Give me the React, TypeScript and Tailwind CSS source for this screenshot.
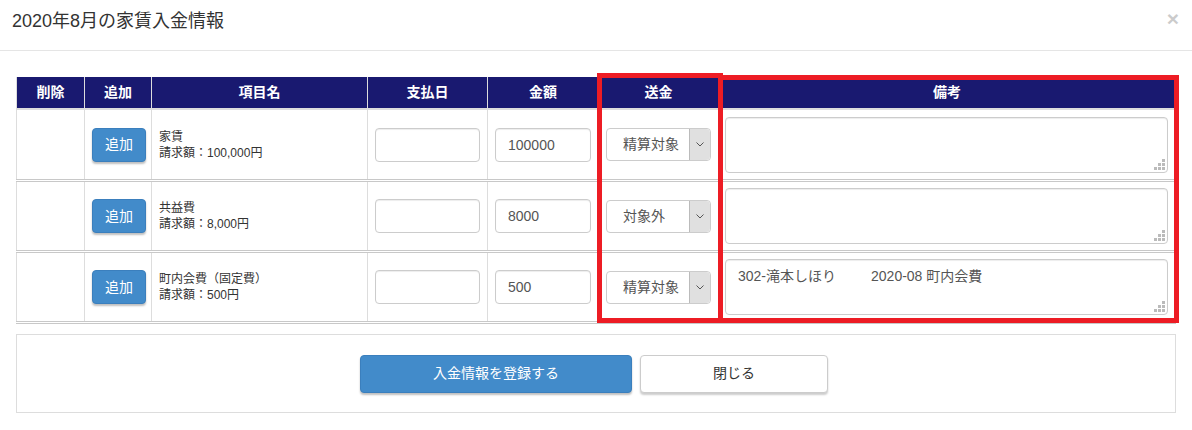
const cols = "grid grid-cols-[68px_67px_216px_120px_111px_120px_458px]";
const cell = "flex items-center border-l border-[#ddd] px-[7px]";

type Row = {
  name: string;
  billed: string;
  amount: string;
  send: string;
  note: string;
  h: string;
};

const rows: Row[] = [
  { name: "家賃", billed: "請求額：100,000円", amount: "100000", send: "精算対象", note: "", h: "h-[72px]" },
  { name: "共益費", billed: "請求額：8,000円", amount: "8000", send: "対象外", note: "", h: "h-[71px]" },
  {
    name: "町内会費（固定費）",
    billed: "請求額：500円",
    amount: "500",
    send: "精算対象",
    note: "302-滝本しほり         2020-08 町内会費",
    h: "h-[71px]",
  },
];

const headers = ["削除", "追加", "項目名", "支払日", "金額", "送金", "備考"];

function Grip() {
  return (
    <svg width="11" height="11" viewBox="0 0 11 11" className="absolute bottom-[3px] right-[3px]">
      <g fill="#bbb">
        <rect x="8" y="0" width="3" height="3" />
        <rect x="4" y="4" width="3" height="3" />
        <rect x="8" y="4" width="3" height="3" />
        <rect x="0" y="8" width="3" height="3" />
        <rect x="4" y="8" width="3" height="3" />
        <rect x="8" y="8" width="3" height="3" />
      </g>
    </svg>
  );
}

function SelectBox({ value }: { value: string }) {
  return (
    <div className="flex h-[33px] w-full rounded border border-[#ccc] bg-white">
      <div className="flex flex-1 items-center pl-4 text-[14px] text-[#555]">{value}</div>
      <div className="flex w-[21px] items-center justify-center rounded-r border-l border-[#bbb] bg-[#e0e0e0]">
        <svg width="8" height="5" viewBox="0 0 8 5">
          <polyline points="0.5,0.5 4,4 7.5,0.5" fill="none" stroke="#555" strokeWidth="1" />
        </svg>
      </div>
    </div>
  );
}

function TableRow({ row }: { row: Row }) {
  return (
    <div className={`${cols} ${row.h} border-b-[3px] border-double border-[#c8c8c8]`}>
      <div className={cell} />
      <div className={cell}>
        <button className="h-[34px] w-[54px] shrink-0 whitespace-nowrap rounded border border-[#3b7fbd] bg-[#428bca] text-[14px] text-white shadow-[0_2px_2px_rgba(0,0,0,0.25)]">
          追加
        </button>
      </div>
      <div className={`${cell} flex-col items-start justify-center text-[12px] leading-[16px] text-[#333]`}>
        <div>{row.name}</div>
        <div>{row.billed}</div>
      </div>
      <div className={cell}>
        <input
          defaultValue=""
          className="h-[34px] w-full rounded border border-[#ccc] px-3 text-[14px] text-[#555] shadow-[inset_0_1px_1px_rgba(0,0,0,0.075)]"
        />
      </div>
      <div className={cell}>
        <input
          defaultValue={row.amount}
          className="h-[34px] w-full rounded border border-[#ccc] px-3 text-[14px] text-[#555] shadow-[inset_0_1px_1px_rgba(0,0,0,0.075)]"
        />
      </div>
      <div className={`${cell} px-[6px]`}>
        <SelectBox value={row.send} />
      </div>
      <div className={`${cell} border-r pl-[6px] pr-[7px]`}>
        <div className="relative w-full">
          <textarea
            defaultValue={row.note}
            className="block h-[56px] w-full resize-none whitespace-pre rounded border border-[#ccc] px-3 py-[6px] text-[14px] leading-[20px] text-[#555] shadow-[inset_0_1px_1px_rgba(0,0,0,0.075)]"
          />
          <Grip />
        </div>
      </div>
    </div>
  );
}

export default function App() {
  return (
    <div className="h-[430px] w-[1192px] bg-white font-['Liberation_Sans','Noto_Sans_CJK_JP',sans-serif] text-[#333]">
      <header className="flex h-[51px] items-start justify-between border-b border-[#e5e5e5] pl-3 pr-[13px] pt-[9px]">
        <h4 className="text-[18px] leading-[25px] text-[#333]">2020年8月の家賃入金情報</h4>
        <span className="mt-[-3px] text-[21px] font-bold leading-[25px] text-black opacity-20">×</span>
      </header>

      <div className="relative mx-4 mt-[26px]">
        <div className={`${cols} h-[33px] border-b-2 border-[#ddd] bg-[#191970]`}>
          {headers.map((h, i) => (
            <div
              key={h}
              className={`flex items-center justify-center border-l border-[#ddd] text-[14px] font-bold text-white ${
                i === headers.length - 1 ? "border-r" : ""
              }`}
            >
              {h}
            </div>
          ))}
        </div>
        {rows.map((r) => (
          <TableRow key={r.name} row={r} />
        ))}

        <div className="pointer-events-none absolute left-[581px] top-[-4px] h-[250px] w-[126px] border-[5px] border-[#ed1c24]" />
        <div className="pointer-events-none absolute left-[702px] top-[-2px] h-[248px] w-[461px] border-[5px] border-[#ed1c24]" />
      </div>

      <div className="mx-4 mt-[10px] flex h-[79px] items-center justify-center gap-2 border border-[#ddd] pr-1">
        <button className="h-[38px] w-[272px] rounded border border-[#3b7fbd] bg-[#428bca] text-[14px] text-white shadow-[0_2px_2px_rgba(0,0,0,0.25)]">
          入金情報を登録する
        </button>
        <button className="h-[38px] w-[188px] rounded border border-[#ccc] bg-white text-[14px] text-[#333] shadow-[0_2px_2px_rgba(0,0,0,0.2)]">
          閉じる
        </button>
      </div>
    </div>
  );
}
